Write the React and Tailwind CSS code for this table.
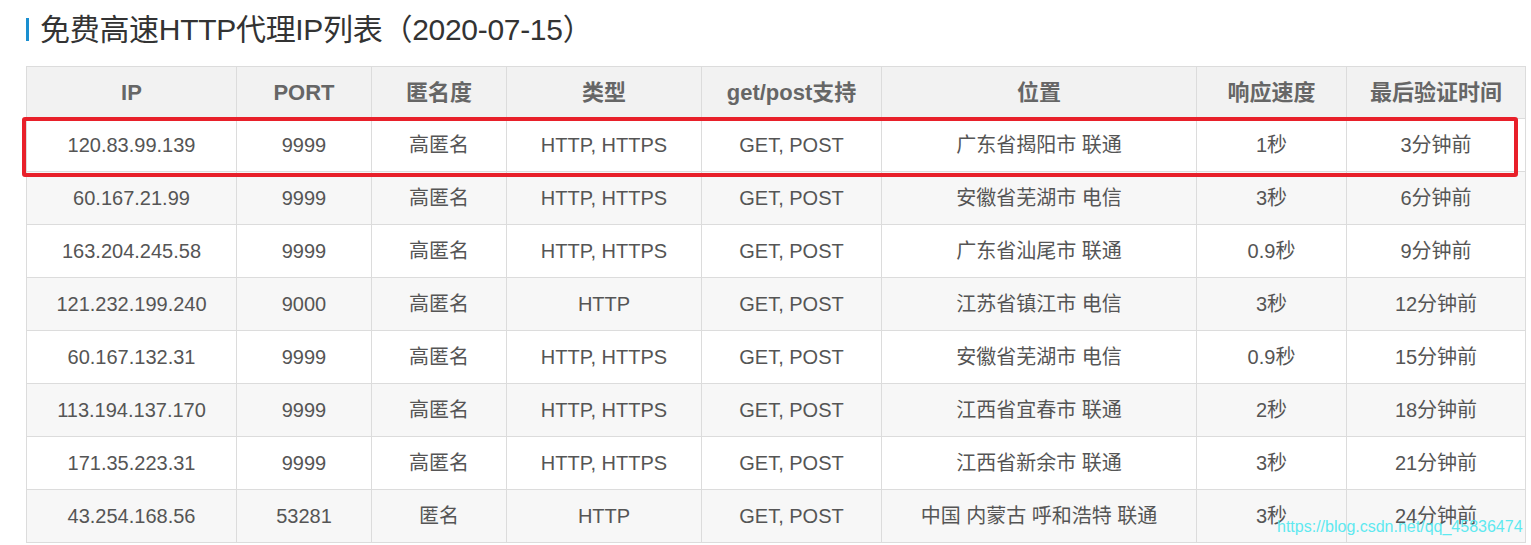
import React from 'react'

const COLS = [
  { label: 'IP', w: 'w-[210px]' },
  { label: 'PORT', w: 'w-[135px]' },
  { label: '匿名度', w: 'w-[135px]' },
  { label: '类型', w: 'w-[195px]' },
  { label: 'get/post支持', w: 'w-[180px]' },
  { label: '位置', w: 'w-[315px]' },
  { label: '响应速度', w: 'w-[150px]' },
  { label: '最后验证时间', w: 'w-[179px]' },
]

const ROWS = [
  ['120.83.99.139', '9999', '高匿名', 'HTTP, HTTPS', 'GET, POST', '广东省揭阳市 联通', '1秒', '3分钟前'],
  ['60.167.21.99', '9999', '高匿名', 'HTTP, HTTPS', 'GET, POST', '安徽省芜湖市 电信', '3秒', '6分钟前'],
  ['163.204.245.58', '9999', '高匿名', 'HTTP, HTTPS', 'GET, POST', '广东省汕尾市 联通', '0.9秒', '9分钟前'],
  ['121.232.199.240', '9000', '高匿名', 'HTTP', 'GET, POST', '江苏省镇江市 电信', '3秒', '12分钟前'],
  ['60.167.132.31', '9999', '高匿名', 'HTTP, HTTPS', 'GET, POST', '安徽省芜湖市 电信', '0.9秒', '15分钟前'],
  ['113.194.137.170', '9999', '高匿名', 'HTTP, HTTPS', 'GET, POST', '江西省宜春市 联通', '2秒', '18分钟前'],
  ['171.35.223.31', '9999', '高匿名', 'HTTP, HTTPS', 'GET, POST', '江西省新余市 联通', '3秒', '21分钟前'],
  ['43.254.168.56', '53281', '匿名', 'HTTP', 'GET, POST', '中国 内蒙古 呼和浩特 联通', '3秒', '24分钟前'],
]

export default function App() {
  return (
    <div className="w-[1531px] h-[545px] overflow-hidden bg-white font-['Liberation_Sans','Noto_Sans_CJK_SC',sans-serif]">
      <div className="flex items-center h-[58px] pl-[26px] pt-[1px]">
        <span className="w-[3px] h-[23px] bg-[#1a8fd0] mr-[11px]" />
        <h1 className="text-[30px] leading-none text-[#333] tracking-[-0.3px]">免费高速HTTP代理IP列表（2020-07-15）</h1>
      </div>

      <div className="relative ml-[26px] mt-[8px] w-[1500px]">
        <table className="border-collapse table-fixed w-[1500px]">
          <thead>
            <tr className="bg-[#f2f2f2]">
              {COLS.map(c => (
                <th key={c.label} className={`${c.w} h-[52px] border border-[#dcdcdc] text-[22px] font-bold text-[#666] text-center`}>
                  {c.label}
                </th>
              ))}
            </tr>
          </thead>
          <tbody>
            {ROWS.map((r, i) => (
              <tr key={i} className={i % 2 === 1 ? 'bg-[#f7f7f7]' : 'bg-white'}>
                {r.map((v, j) => (
                  <td key={j} className="h-[53px] border border-[#dcdcdc] text-[20px] text-[#555] text-center">
                    {v}
                  </td>
                ))}
              </tr>
            ))}
          </tbody>
        </table>

        {/* highlight box */}
        <div className="absolute left-[-4px] top-[51px] w-[1496px] h-[60px] border-[4px] border-[#e8202a] rounded-[3px] pointer-events-none" />

        {/* watermark */}
        <span className="absolute left-[1251px] top-[449px] text-[16px] text-[#4fe8f0] opacity-90 whitespace-nowrap">
          https://blog.csdn.net/qq_45836474
        </span>
      </div>
    </div>
  )
}
